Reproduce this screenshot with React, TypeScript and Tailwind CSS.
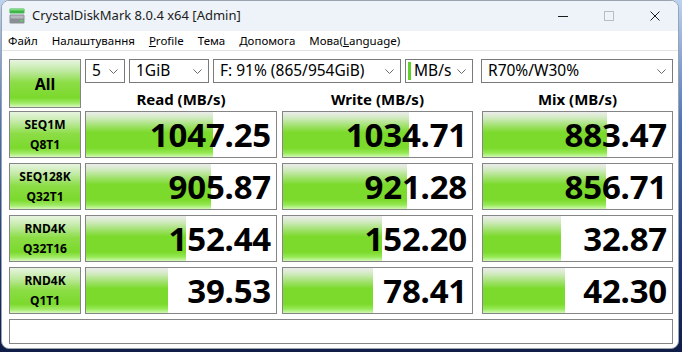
import React from 'react';

type Row = {
  label: [string, string];
  values: [string, string, string];
  fills: [number, number, number];
};

const rows: Row[] = [
  { label: ['SEQ1M', 'Q8T1'], values: ['1047.25', '1034.71', '883.47'], fills: [127, 126, 124] },
  { label: ['SEQ128K', 'Q32T1'], values: ['905.87', '921.28', '856.71'], fills: [125, 124, 123] },
  { label: ['RND4K', 'Q32T16'], values: ['152.44', '152.20', '32.87'], fills: [100, 99, 78] },
  { label: ['RND4K', 'Q1T1'], values: ['39.53', '78.41', '42.30'], fills: [82, 90, 82] },
];

// column widths and the gap before each one
const cols = [
  { w: 'w-[192px]', ml: 'ml-[4px]' },
  { w: 'w-[191px]', ml: 'ml-[5px]' },
  { w: 'w-[191px]', ml: 'ml-[9px]' },
];

const Chevron = () => (
  <svg width="9" height="5" viewBox="0 0 9 5" className="shrink-0">
    <polyline points="0.5,0.5 4.5,4.5 8.5,0.5" fill="none" stroke="#6b6b6b" strokeWidth="1" />
  </svg>
);

const Select: React.FC<{ w: string; ml?: string; children: React.ReactNode }> = ({ w, ml = '', children }) => (
  <div className={`${w} ${ml} h-[24px] border border-[#7a7a7a] bg-white flex items-center pl-[6px] pr-[6px] text-[15.5px] text-black leading-none`}>
    <div className="flex-1 flex items-center whitespace-nowrap">{children}</div>
    <Chevron />
  </div>
);

const Meter: React.FC<{ value: string; fill: number; w: string; ml: string }> = ({ value, fill, w, ml }) => (
  <div className={`${w} ${ml} h-[47px] border border-[#858585] bg-white relative flex items-center justify-end pr-[5px]`}>
    <div
      className="absolute left-0 top-0 bottom-0 bg-[linear-gradient(to_bottom,#ececec_0%,#cfeabc_14%,#98e05e_34%,#7bda2b_46%,#7bda2b_80%,#96ea55_91%,#d2f8b6_100%)]"
      style={{ width: fill }}
    />
    <span className="relative text-[33px] font-bold leading-none tracking-[-0.2px] text-black">{value}</span>
  </div>
);

export default function App() {
  return (
    <div className="w-[682px] h-[352px] overflow-hidden bg-[linear-gradient(to_bottom,#bcd3f1_0%,#4f74b8_35%,#1c3576_75%,#0f1d47_100%)] font-['Noto_Sans',sans-serif]">
      <div className="ml-[1px] w-[678px] h-[349px] rounded-[8px] border border-[#9ba3ae] bg-white overflow-hidden flex flex-col">
        {/* Title bar */}
        <div className="h-[30px] bg-[#eef3f9] flex items-center shrink-0">
          <svg width="16" height="16" viewBox="0 0 16 16" className="ml-[7px]">
            <rect x="0.5" y="0.5" width="15" height="5" rx="1" fill="#3fb54a" />
            <rect x="0.5" y="1" width="15" height="1.5" fill="#7fdb7f" />
            <rect x="0.5" y="6.5" width="15" height="9" rx="1.2" fill="#8a8f96" />
            <rect x="1.5" y="7.5" width="13" height="3" fill="#b5b9be" />
            <rect x="11" y="12" width="3" height="1.5" fill="#58d858" />
          </svg>
          <span className="ml-[7px] text-[13px] text-[#1b1b1b]">CrystalDiskMark 8.0.4 x64 [Admin]</span>
          <div className="flex-1" />
          <div className="w-[46px] h-[30px] flex items-center justify-center">
            <div className="w-[10px] h-px bg-[#1b1b1b]" />
          </div>
          <div className="w-[46px] h-[30px] flex items-center justify-center">
            <div className="w-[10px] h-[10px] border border-[#b9bcc0]" />
          </div>
          <div className="w-[46px] h-[30px] flex items-center justify-center">
            <svg width="10" height="10" viewBox="0 0 10 10">
              <path d="M0.5 0.5 L9.5 9.5 M9.5 0.5 L0.5 9.5" stroke="#1b1b1b" strokeWidth="1" />
            </svg>
          </div>
        </div>

        {/* Menu bar */}
        <div className="h-[20px] bg-white border-b border-[#e3e3e3] flex items-center pl-[6px] gap-[14px] text-[11.5px] text-black shrink-0">
          <span>Файл</span>
          <span>Налаштування</span>
          <span><span className="underline">P</span>rofile</span>
          <span>Тема</span>
          <span>Допомога</span>
          <span>Мова(<span className="underline">L</span>anguage)</span>
        </div>

        {/* Body */}
        <div className="pl-[7px] pt-[8px] flex flex-col">
          <div className="flex h-[52px]">
            <button className="w-[72px] h-[49px] border border-[#858585] bg-[linear-gradient(to_bottom,#e8f5e0_0%,#c2eaa6_22%,#8cdd46_48%,#7bd92c_80%,#a2eb68_92%,#d9f8c3_100%)] text-[16px] font-bold text-black">
              All
            </button>
            <div className="flex flex-col">
              <div className="flex">
                <Select w="w-[40px]" ml="ml-[4px]">5</Select>
                <Select w="w-[80px]" ml="ml-[4px]">1GiB</Select>
                <Select w="w-[188px]" ml="ml-[4px]">F: 91% (865/954GiB)</Select>
                <div className="w-[68px] ml-[4px] h-[24px] border border-[#7a7a7a] bg-white flex items-center pl-[2px] pr-[6px] text-[15.5px] leading-none">
                  <div className="w-[3px] h-[18px] bg-[#5fd12a]" />
                  <span className="flex-1 ml-[3px]">MB/s</span>
                  <Chevron />
                </div>
                <Select w="w-[192px]" ml="ml-[8px]">R70%/W30%</Select>
              </div>
              <div className="flex mt-[6px] text-[15px] font-bold text-black leading-[20px]">
                <div className="w-[192px] ml-[4px] text-center">Read (MB/s)</div>
                <div className="w-[191px] ml-[5px] text-center">Write (MB/s)</div>
                <div className="w-[191px] ml-[9px] text-center">Mix (MB/s)</div>
              </div>
            </div>
          </div>

          <div className="flex flex-col gap-[5px]">
            {rows.map((r, i) => (
              <div key={i} className="flex">
                <div className="w-[72px] h-[47px] border border-[#858585] bg-[linear-gradient(to_bottom,#e8f5e0_0%,#c2eaa6_22%,#8cdd46_48%,#7bd92c_80%,#a2eb68_92%,#d9f8c3_100%)] flex flex-col items-center justify-center text-[12px] font-bold leading-[20px] text-black">
                  <span>{r.label[0]}</span>
                  <span>{r.label[1]}</span>
                </div>
                {cols.map((c, j) => (
                  <Meter key={j} value={r.values[j]} fill={r.fills[j]} w={c.w} ml={c.ml} />
                ))}
              </div>
            ))}
            <div className="w-[664px] h-[25px] border border-[#858585] bg-white" />
          </div>
        </div>
      </div>
    </div>
  );
}
